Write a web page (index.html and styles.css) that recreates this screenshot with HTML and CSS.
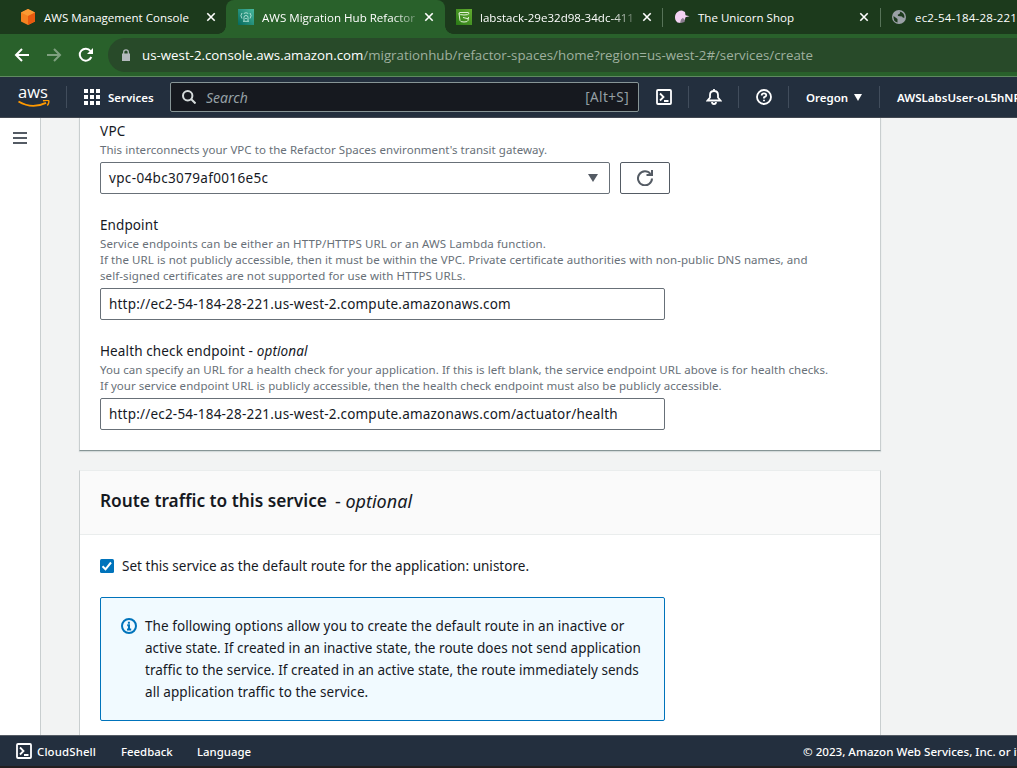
FILE: index.html
```html
<!DOCTYPE html>
<html lang="en">
<head>
<meta charset="utf-8">
<title>AWS Migration Hub Refactor Spaces</title>
<link rel="stylesheet" href="styles.css">
</head>
<body>
<div class="window">
  <div class="tabs">
    <div class="tab tab-1">
      <svg class="fav" viewBox="0 0 16 16"><path d="M8 0l7 3.500v9L8 16l-7-3.500v-9z" fill="#f58220"/><path d="M1 3.500L8 0l7 3.500L8 7z" fill="#fb9a33"/><path d="M8 7l7-3.500v9L8 16z" fill="#e8590f"/></svg>
      <span class="tab-title">AWS Management Console</span>
      <svg class="close" viewBox="0 0 10 10"><path d="M1.300 1.300l7.400 7.400M8.700 1.300L1.300 8.700"/></svg>
    </div>
    <div class="tab tab-2 active">
      <svg class="fav" viewBox="0 0 16 16"><defs><linearGradient id="teal" x1="0" y1="1" x2="1" y2="0"><stop offset="0" stop-color="#05695c"/><stop offset="1" stop-color="#48b99d"/></linearGradient></defs><path d="M0 0h16v16H0z" fill="url(#teal)"/><g fill="none" stroke="#b9e6da" stroke-width=".9"><path d="M4 4Q1.800 6.500 4 9.500M12 4q2.200 2.500 0 5.500M5.800 4.500q2.200-1.600 4.400 0M5 12.300h6M6 12V8.200q0-1.700 2-1.700t2 1.700V12M7.200 9.500h1.600"/></g></svg>
      <span class="tab-title fade">AWS Migration Hub Refactor</span>
      <svg class="close" viewBox="0 0 10 10"><path d="M1.300 1.300l7.400 7.400M8.700 1.300L1.300 8.700"/></svg>
    </div>
    <div class="tab tab-3">
      <svg class="fav" viewBox="0 0 16 16"><defs><linearGradient id="lime" x1="0" y1="1" x2="1" y2="0"><stop offset="0" stop-color="#2a7a16"/><stop offset="1" stop-color="#63ad30"/></linearGradient></defs><path d="M0 0h16v16H0z" fill="url(#lime)"/><g fill="none" stroke="#e2f2d8"><path d="M3 4.500q0-1 1-1h8q1 0 1 1-.4 1.500-5 1.500T3 4.500l1 7q.2 1.500 4 1.500t4-1.500l.5-3.500M7 8.500l5 1.200"/></g></svg>
      <span class="tab-title fade">labstack-29e32d98-34dc-411</span>
      <svg class="close" viewBox="0 0 10 10"><path d="M1.300 1.300l7.400 7.400M8.700 1.300L1.300 8.700"/></svg>
    </div>
    <div class="tab tab-4">
      <svg class="fav" viewBox="0 0 16 16"><path d="M7 8l5-1.500-1.500 6.500L7 14z" fill="#8b7d90"/><path d="M8 1.500Q3 1.500 1.300 6q-1.300 4.500 2.200 7.500L6.500 14 7 10.500l2-1.800 1.500 2.300.8-2.800 4.200-1-4-1L11 3z" fill="#f3d3f3"/></svg>
      <span class="tab-title">The Unicorn Shop</span>
      <svg class="close" viewBox="0 0 10 10"><path d="M1.300 1.300l7.400 7.400M8.700 1.300L1.300 8.700"/></svg>
    </div>
    <div class="tab tab-5">
      <svg class="fav" viewBox="0 0 16 16"><circle cx="8" cy="8" r="7" fill="#9aa0a6"/><path d="M2.500 7l4 3v3.500Q2 12.500 2.500 7zM8.500 2.500q1.500 1.500-.5 2.500-2 .5-1 2l4 .5q1 2 2.500 1Q13.500 3.500 8.500 2.500z" fill="#1d3a1d"/></svg>
      <span class="tab-title">ec2-54-184-28-221</span>
    </div>
  </div>

  <div class="toolbar">
    <svg class="tool" viewBox="0 0 16 16"><path d="M15 8H2M8 2L2 8l6 6"/></svg>
    <svg class="tool dim" viewBox="0 0 16 16"><path d="M1 8h13M8 2l6 6-6 6"/></svg>
    <svg class="tool" viewBox="0 0 16 16"><path d="M13.300 10A6 6 0 1 1 12.500 4"/><path class="solid" d="M15 1v6H9z"/></svg>
    <div class="address">
      <svg class="lock" viewBox="0 0 10 12"><path d="M1 4.500h8V12H1z" fill="#b4b9bd"/><path d="M2.700 5V3q0-2.200 2.300-2.200T7.300 3v2" fill="none" stroke="#b4b9bd" stroke-width="1.300"/></svg>
      <span class="url"><span class="host">us-west-2.console.aws.amazon.com</span>/migrationhub/refactor-spaces/home?region=us-west-2#/services/create</span>
    </div>
  </div>

  <header class="nav">
    <div class="logo">
      <span class="logo-word">aws</span>
      <svg class="smile" viewBox="0 0 32 9"><path d="M.5 1.500Q14 9.500 28 2.800" fill="none" stroke="#f90" stroke-width="1.900"/><path d="M25 .8q4.500-1 5.800 0 .5 2-1.500 4.700" fill="none" stroke="#f90" stroke-width="1.400"/></svg>
    </div>
    <div class="services">
      <svg class="grid" viewBox="0 0 16 16"><path d="M0 0h4v4H0zM6 0h4v4H6zM12 0h4v4h-4zM0 6h4v4H0zM6 6h4v4H6zM12 6h4v4h-4zM0 12h4v4H0zM6 12h4v4H6zM12 12h4v4h-4z"/></svg>
      <span>Services</span>
    </div>
    <div class="search">
      <svg class="lens" viewBox="0 0 14 14"><circle cx="5.700" cy="5.700" r="4.700"/><path d="M9 9l4.500 4.500"/></svg>
      <span class="search-hint">Search</span>
      <span class="search-key">[Alt+S]</span>
    </div>
    <div class="cell c-shell"><svg class="ico" viewBox="0 0 16 16"><rect x="1" y="1" width="14" height="14" rx="1"/><path d="M4 4.500L7.500 8 4 11.500M8 12h4.500"/></svg></div>
    <div class="cell c-bell"><svg class="ico" viewBox="0 0 16 16"><path d="M8 0v2M1.500 11.500L4 8.500V6q0-4 4-4t4 4v2.500l2.500 3z"/><path d="M6 13q0 2 2 2t2-2"/></svg></div>
    <div class="cell c-help"><svg class="ico" viewBox="0 0 16 16"><circle cx="8" cy="8" r="7"/><path d="M5.700 6.500q0-2.200 2.300-2.200t2.300 2Q10.300 7.500 8 8.300v1.200M8 10.700v1.600"/></svg></div>
    <div class="cell c-region"><span>Oregon</span><svg class="tri" viewBox="0 0 8 7"><path d="M0 0h8L4 7z"/></svg></div>
    <div class="cell c-user"><span>AWSLabsUser-oL5hNR</span></div>
  </header>

  <div class="main">
    <aside class="rail"><svg class="burger" viewBox="0 0 14 12"><path d="M0 1h14M0 6h14M0 11h14"/></svg></aside>
    <main class="content">
      <section class="card card-a">
        <div class="label"><span class="w-vpc">VPC</span></div>
        <div class="help"><span class="h1">This interconnects your VPC to the Refactor Spaces environment's transit gateway.</span></div>
        <div class="row">
          <div class="select"><span class="v1">vpc-04bc3079af0016e5c</span><svg class="caret" viewBox="0 0 10 8"><path d="M0 0h10L5 8z"/></svg></div>
          <button class="refresh"><svg viewBox="0 0 16 16"><path d="M15 8.500A7 7 0 1 1 13.500 4"/><path d="M15 0v5H9.500" /></svg></button>
        </div>
        <div class="label gap"><span class="w-end">Endpoint</span></div>
        <div class="help"><span class="h2">Service endpoints can be either an HTTP/HTTPS URL or an AWS Lambda function.</span><br><span class="h3">If the URL is not publicly accessible, then it must be within the VPC. Private certificate authorities with non-public DNS names, and</span><br><span class="h4">self-signed certificates are not supported for use with HTTPS URLs.</span></div>
        <div class="input"><span class="v2">http://ec2-54-184-28-221.us-west-2.compute.amazonaws.com</span></div>
        <div class="label gap"><span class="w-health">Health check endpoint - <i>optional</i></span></div>
        <div class="help"><span class="h5">You can specify an URL for a health check for your application. If this is left blank, the service endpoint URL above is for health checks.</span><br><span class="h6">If your service endpoint URL is publicly accessible, then the health check endpoint must also be publicly accessible.</span></div>
        <div class="input"><span class="v2">http://ec2-54-184-28-221.us-west-2.compute.amazonaws.com/actuator/health</span></div>
      </section>
      <section class="card card-b">
        <h2 class="card-head"><span class="t1">Route traffic to this service</span><span class="t2">- <i>optional</i></span></h2>
        <div class="card-body">
          <div class="check"><svg class="box" viewBox="0 0 14 14"><rect width="14" height="14" rx="1.500" fill="#0073bb"/><path d="M2.500 7.300l3 3L11 3.500" fill="none" stroke="#fff" stroke-width="2"/></svg><span class="ck">Set this service as the default route for the application: unistore.</span></div>
          <div class="info">
            <svg class="info-ico" viewBox="0 0 16 16"><circle cx="8" cy="8" r="7"/><path d="M6.200 7.300H8v4M6 11.500h4.200M7.900 3.800v2"/></svg>
            <div class="info-text"><span class="i1">The following options allow you to create the default route in an inactive or</span><br><span class="i2">active state. If created in an inactive state, the route does not send application</span><br><span class="i2">traffic to the service. If created in an active state, the route immediately sends</span><br><span class="i1">all application traffic to the service.</span></div>
          </div>
        </div>
      </section>
    </main>
  </div>

  <footer class="footer">
    <svg class="ico" viewBox="0 0 16 16"><rect x="1" y="1" width="14" height="14" rx="1"/><path d="M4 4.500L7.500 8 4 11.500M8 12h4.500"/></svg>
    <span class="f1">CloudShell</span><span class="f2">Feedback</span><span class="f3">Language</span>
    <span class="copy">© 2023, Amazon Web Services, Inc. or its</span>
  </footer>
</div>
</body>
</html>
```

FILE: styles.css
```css
* { box-sizing: border-box; }
body { margin: 0; font-family: "Noto Sans", "Open Sans", sans-serif; font-size: 13.5px; color: #16191f; }
svg { display: block; flex: none; }
.window { width: 1017px; height: 768px; display: flex; flex-direction: column; overflow: hidden; background: #231f20; white-space: nowrap; }

.tabs { height: 34px; flex: none; display: flex; background: #1c3a1c; overflow: hidden; }
.tab { height: 34px; flex: none; display: flex; align-items: center; color: #fff; font-family: "Open Sans", sans-serif; font-size: 11.55px; position: relative; }
.tab-1 { width: 226px; padding-left: 20px; }
.tab-2 { width: 219px; padding-left: 12px; }
.tab-3 { width: 217px; padding-left: 11px; }
.tab-4 { width: 218px; padding-left: 12px; }
.tab-5 { width: 138px; padding-left: 11px; }
.tab-5 .tab-title { letter-spacing: .15px; }
.active { background: #29612b; border-radius: 8px 8px 0 0; }
.tab-4::before, .tab-5::before { content: ""; position: absolute; left: 0; top: 8px; width: 1px; height: 19px; background: #577358; }
.active::before, .active::after { content: ""; position: absolute; bottom: 0; width: 8px; height: 8px; }
.active::before { left: -8px; background: radial-gradient(circle at 0 0, transparent 7.5px, #29612b 8px); }
.active::after { right: -8px; background: radial-gradient(circle at 100% 0, transparent 7.5px, #29612b 8px); }
.fav { width: 16px; height: 16px; margin-right: 8px; }
.tab-title { flex: 1; }
.fade { -webkit-mask-image: linear-gradient(90deg, #000 84%, transparent 104%); mask-image: linear-gradient(90deg, #000 84%, transparent 104%); }
.close { width: 10px; height: 10px; margin: 0 10px 0 6px; stroke: #fff; stroke-width: 1.6; }
.tab-2 .close, .tab-4 .close { margin-right: 11px; }

.toolbar { height: 43px; flex: none; display: flex; align-items: center; background: #29612b; border-bottom: 1px solid #5f8a60; padding-left: 14px; gap: 16px; }
.tool { width: 16px; height: 16px; fill: none; stroke: #fff; stroke-width: 2; }
.tool .solid { fill: #fff; stroke: none; }
.dim { opacity: .4; }
.address { flex: 1; height: 34px; margin-left: -2px; border-radius: 17px 0 0 17px; background: #284a29; display: flex; align-items: center; padding-left: 13px; }
.lock { width: 10px; height: 12px; margin-right: 11px; }
.url { font-family: "Open Sans", sans-serif; font-size: 13.3px; color: #9fb09f; }
.host { color: #fff; }

.nav { height: 41px; flex: none; display: flex; align-items: center; background: #232f3e; color: #fff; font-size: 11.5px; font-weight: 600; border-bottom: 1px solid #414750; }
.logo { width: 67px; flex: none; height: 22px; padding-left: 18px; border-right: 1px solid #414d5c; display: flex; flex-direction: column; justify-content: center; }
.logo-word { font-family: "Open Sans", sans-serif; font-size: 16.5px; line-height: 11px; font-weight: 500; }
.smile { width: 32px; height: 9px; margin-top: 3px; }
.services { width: 103px; flex: none; padding-left: 17px; display: flex; align-items: center; gap: 8px; }
.grid { width: 16px; height: 16px; fill: #fff; }
.search { width: 469px; flex: none; height: 30px; border: 1px solid #879596; border-radius: 2px; background: #16191f; display: flex; align-items: center; padding: 0 9px 0 11px; color: #95a0a5; font-weight: 400; font-size: 14px; }
.lens { width: 14px; height: 14px; margin-right: 10px; fill: none; stroke: #d5dbdb; stroke-width: 2; }
.search-hint { flex: 1; font-style: italic; }
.search-key { font-size: 13.5px; letter-spacing: .4px; }
.cell { height: 22px; display: flex; align-items: center; justify-content: center; flex: none; }
.c-shell, .c-bell, .c-help, .c-region { border-right: 1px solid #414d5c; }
.c-shell { width: 50px; }
.c-bell { width: 50px; }
.c-help { width: 50px; }
.c-region { width: 91px; gap: 6px; }
.c-user { padding-left: 17px; }
.ico { width: 16px; height: 16px; fill: none; stroke: #fff; stroke-width: 1.8; }
.tri { width: 8px; height: 7px; fill: #fff; }

.main { flex: 1; min-height: 0; display: flex; background: #f2f3f3; overflow: hidden; }
.rail { width: 41px; background: #fff; border-right: 1px solid #c9cecf; padding: 14px 0 0 13px; }
.burger { width: 14px; height: 12px; stroke: #545b64; stroke-width: 2; }
.content { width: 802px; margin-left: 38px; display: flex; flex-direction: column; gap: 19px; }
.card { background: #fff; border: 1px solid #c9cecf; flex: none; }
.card-a { height: 333px; border-top: 0; border-bottom: 1px solid #879596; box-shadow: 0 1px 1px #d5dbdb; padding: 2px 20px 0; }
.label { height: 22px; line-height: 22px; }
.w-vpc { letter-spacing: .3px; }
.w-end { letter-spacing: .1px; }
.w-health { letter-spacing: .12px; }
.help { font-size: 11.5px; line-height: 16px; color: #687078; }
.h1 { letter-spacing: .05px; }
.h2 { letter-spacing: .12px; }
.h3 { letter-spacing: .072px; }
.h4 { letter-spacing: .09px; }
.h5 { letter-spacing: .065px; }
.h6 { letter-spacing: .035px; }
.v1 { letter-spacing: .35px; }
.v2 { letter-spacing: .2px; }
.i1 { letter-spacing: .065px; }
.i2, .ck { letter-spacing: .025px; }
.gap { margin-top: 20px; }
.row { display: flex; gap: 10px; margin-top: 4px; }
.select, .input { height: 32px; border: 1px solid #687078; border-radius: 2px; background: #fff; display: flex; align-items: center; padding: 0 8px; }
.select { width: 510px; justify-content: space-between; padding-right: 11px; }
.input { width: 565px; margin-top: 4px; }
.caret { width: 10px; height: 8px; fill: #545b64; }
.refresh { width: 50px; height: 32px; border: 1px solid #545b64; border-radius: 2px; background: #fff; display: flex; align-items: center; justify-content: center; padding: 0; }
.refresh svg { width: 16px; height: 16px; fill: none; stroke: #545b64; stroke-width: 2; }
.card-b { height: 300px; border-top-color: #eaeded; }
.card-head { margin: 0; height: 64px; background: #fafafa; border-bottom: 1px solid #eaeded; padding: 0 20px 4px; display: flex; align-items: center; gap: 8px; font-size: 17.3px; font-weight: 600; }
.t2 { font-weight: 400; font-size: 18px; }
.card-body { padding: 20px 20px 0; }
.check { height: 22px; display: flex; align-items: center; gap: 8px; }
.box { width: 14px; height: 14px; }
.info { width: 565px; height: 124px; margin-top: 20px; border: 1px solid #0073bb; border-radius: 2px; background: #f1faff; padding: 17px 20px; display: flex; gap: 8px; line-height: 22px; }
.info-ico { width: 16px; height: 16px; margin-top: 3px; fill: none; stroke: #0073bb; stroke-width: 2; }

.footer { height: 31px; flex: none; margin-bottom: 2px; display: flex; align-items: center; background: #232f3e; border-top: 1px solid #545b64; padding-left: 16px; color: #fff; font-size: 11.4px; font-weight: 500; }
.f1 { width: 84px; margin-left: 5px; letter-spacing: .15px; }
.f2 { width: 76px; }
.copy { margin-left: auto; width: 214px; font-size: 11.6px; }
```
